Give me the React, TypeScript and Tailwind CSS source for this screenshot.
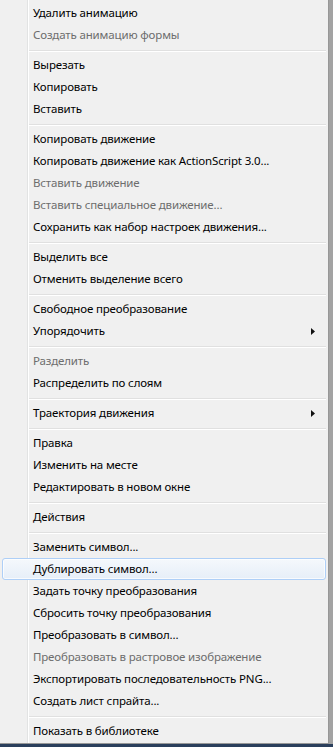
import React from 'react';

type Entry =
  | { type: 'item'; label: string; disabled?: boolean; sub?: boolean; active?: boolean }
  | { type: 'sep' };

const item = (label: string, opts: { disabled?: boolean; sub?: boolean; active?: boolean } = {}): Entry => ({
  type: 'item',
  label,
  ...opts,
});
const sep: Entry = { type: 'sep' };

const entries: Entry[] = [
  item('Удалить анимацию'),
  item('Создать анимацию формы', { disabled: true }),
  sep,
  item('Вырезать'),
  item('Копировать'),
  item('Вставить'),
  sep,
  item('Копировать движение'),
  item('Копировать движение как ActionScript 3.0...'),
  item('Вставить движение', { disabled: true }),
  item('Вставить специальное движение...', { disabled: true }),
  item('Сохранить как набор настроек движения...'),
  sep,
  item('Выделить все'),
  item('Отменить выделение всего'),
  sep,
  item('Свободное преобразование'),
  item('Упорядочить', { sub: true }),
  sep,
  item('Разделить', { disabled: true }),
  item('Распределить по слоям'),
  sep,
  item('Траектория движения', { sub: true }),
  sep,
  item('Правка'),
  item('Изменить на месте'),
  item('Редактировать в новом окне'),
  sep,
  item('Действия'),
  sep,
  item('Заменить символ...'),
  item('Дублировать символ...', { active: true }),
  item('Задать точку преобразования'),
  item('Сбросить точку преобразования'),
  item('Преобразовать в символ...'),
  item('Преобразовать в растровое изображение', { disabled: true }),
  item('Экспортировать последовательность PNG...'),
  item('Создать лист спрайта...'),
  sep,
  item('Показать в библиотеке'),
];

const Arrow = () => (
  <svg width="4" height="7" viewBox="0 0 4 7">
    <path d="M0 0 L4 3.5 L0 7 Z" fill="#111" />
  </svg>
);

const ContextMenu: React.FC = () => {
  return (
    // gutter line drawn as part of the menu background
    <div className="w-[329px] h-[744px] border-r border-b border-[#979797] pt-[2px] bg-[linear-gradient(to_right,#f0f0f0_27px,#e2e3e3_27px,#e2e3e3_28px,#ffffff_28px,#ffffff_29px,#f0f0f0_29px)]">
      {entries.map((e, i) => {
        if (e.type === 'sep') {
          return (
            <div key={i} className="h-[8px] pt-[4px] pl-[29px] pr-[2px]">
              <div className="h-px bg-[#e0e0e0]" />
              <div className="h-px bg-white" />
            </div>
          );
        }
        if (e.active) {
          return (
            <div
              key={i}
              className="mx-[2px] h-[22px] flex items-center pl-[30px] rounded-[3px] border border-[#aecff7] bg-gradient-to-b from-[#f5f8fc] to-[#e6eef8] shadow-[inset_0_0_0_1px_rgba(255,255,255,0.7)] text-black"
            >
              {e.label}
            </div>
          );
        }
        return (
          <div
            key={i}
            className={`h-[22px] flex items-center justify-between pl-[33px] pr-[13px] ${
              e.disabled ? 'text-[#6d6d6d]' : 'text-black'
            }`}
          >
            <span>{e.label}</span>
            {e.sub && <Arrow />}
          </div>
        );
      })}
    </div>
  );
};

const App: React.FC = () => {
  return (
    <div
      className="w-[333px] h-[747px] overflow-hidden bg-[#2b3f5c] text-[11.5px] tracking-[-0.15px] leading-none"
      style={{ fontFamily: '"Noto Sans", "Open Sans", sans-serif' }}
    >
      <div className="flex">
        <ContextMenu />
        <div className="flex-1 h-[744px] bg-[#a3a3a3]" />
      </div>
    </div>
  );
};

export default App;
